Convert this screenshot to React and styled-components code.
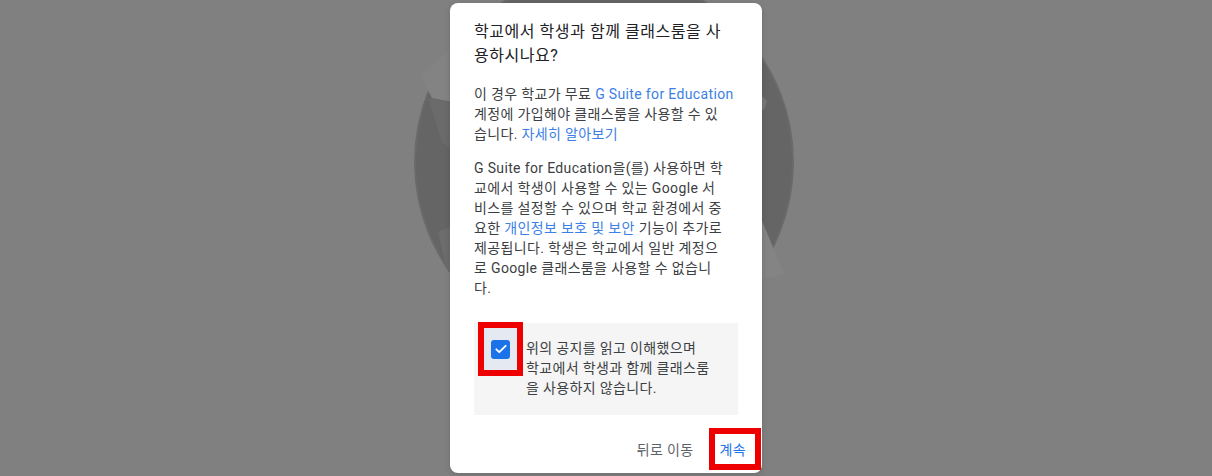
import React from 'react';
import styled, { createGlobalStyle } from 'styled-components';

const GlobalStyle = createGlobalStyle`
  html, body {
    margin: 0;
    padding: 0;
  }
  body {
    font-family: Roboto, "Noto Sans CJK KR", sans-serif;
  }
`;

const BLUE = '#1a73e8';
const LINK = '#3c7fe6';
const RED = '#ee0000';

function Backdrop() {
  return (
    <Art viewBox="0 0 1212 476" preserveAspectRatio="none">
      <circle cx="604" cy="162" r="189" fill="#656565" />
      <circle cx="604" cy="162" r="189" fill="none" stroke="#6a6a6a" strokeWidth="2" />
      <polygon points="420,76 452,46 452,102 432,98" fill="#838383" />
      <polygon points="428,98 452,102 452,150 442,142" fill="#6b6b6b" />
      <polygon points="438,232 452,226 452,274 446,266" fill="#6d6d6d" />
      <polygon points="760,216 784,274 760,280" fill="#848484" />
      <polygon points="760,94 767,101 764,110 760,108" fill="#787878" />
    </Art>
  );
}

function CheckIcon() {
  return (
    <svg width="14" height="14" viewBox="0 0 24 24">
      <path d="M4 12.5l5 5L20 6.5" fill="none" stroke="#fff" strokeWidth="3.2" strokeLinecap="round" strokeLinejoin="round" />
    </svg>
  );
}

function App() {
  return (
    <>
      <GlobalStyle />
      <Page>
        <Backdrop />
        <Dialog>
          <Content>
            <Title>
              학교에서 학생과 함께 클래스룸을 사<br />용하시나요?
            </Title>
            <Para gap={16}>
              이 경우 학교가 무료 <Link>G Suite for Education</Link>
              <br />계정에 가입해야 클래스룸을 사용할 수 있
              <br />습니다. <Link>자세히 알아보기</Link>
            </Para>
            <Para gap={14}>
              G Suite for Education을(를) 사용하면 학
              <br />교에서 학생이 사용할 수 있는 Google 서
              <br />비스를 설정할 수 있으며 학교 환경에서 중
              <br />요한 <Link>개인정보 보호 및 보안</Link> 기능이 추가로
              <br />제공됩니다. 학생은 학교에서 일반 계정으
              <br />로 Google 클래스룸을 사용할 수 없습니
              <br />다.
            </Para>
            <Notice>
              <CheckWrap>
                <Checkbox>
                  <CheckIcon />
                </Checkbox>
              </CheckWrap>
              <NoticeText>
                위의 공지를 읽고 이해했으며
                <br />학교에서 학생과 함께 클래스룸
                <br />을 사용하지 않습니다.
              </NoticeText>
            </Notice>
          </Content>
          <Footer>
            <TextButton>뒤로 이동</TextButton>
            <TextButton primary marked>계속</TextButton>
          </Footer>
        </Dialog>
      </Page>
    </>
  );
}

export default App;

const Page = styled.div`
  position: relative;
  width: 100%;
  height: 100vh;
  background: #808080;
  display: flex;
  align-items: center;
  justify-content: center;
  overflow: hidden;
`;

const Art = styled.svg`
  position: absolute;
  inset: 0;
  width: 100%;
  height: 100%;
`;

const Dialog = styled.div`
  position: relative;
  z-index: 1;
  width: 312px;
  background: #fff;
  border-radius: 8px;
  box-shadow: 0 2px 6px rgba(0, 0, 0, 0.15);
`;

const Content = styled.div`
  padding: 17px 24px 0;
`;

const Title = styled.h2`
  margin: 0;
  font-size: 16px;
  line-height: 24px;
  font-weight: 400;
  letter-spacing: 0.55px;
  color: #202124;
  white-space: nowrap;
`;

const Para = styled.p`
  margin: ${p => p.gap}px 0 0;
  font-size: 14px;
  line-height: 20px;
  letter-spacing: 0.35px;
  color: #3c4043;
  white-space: nowrap;
`;

const Link = styled.span`
  color: ${LINK};
`;

const Notice = styled.div`
  margin-top: 25px;
  background: #f5f5f5;
  display: flex;
  align-items: flex-start;
`;

const CheckWrap = styled.div`
  margin: -1px 0 0 4px;
  width: 33px;
  height: 42px;
  border: 6px solid ${RED};
  background: #e4e9f2;
  display: flex;
  align-items: center;
  justify-content: center;
  flex-shrink: 0;
`;

const Checkbox = styled.div`
  width: 19px;
  height: 19px;
  border-radius: 3px;
  background: ${BLUE};
  display: flex;
  align-items: center;
  justify-content: center;
`;

const NoticeText = styled.div`
  margin: 15px 0 17px 3px;
  font-size: 14px;
  line-height: 20px;
  letter-spacing: 0.35px;
  color: #3c4043;
  white-space: nowrap;
`;

const Footer = styled.div`
  display: flex;
  justify-content: flex-end;
  align-items: center;
  gap: 7px;
  padding: 13px 1px 3px 24px;
`;

const TextButton = styled.button`
  height: 42px;
  box-sizing: border-box;
  background: #fff;
  border: ${p => (p.marked ? `6px solid ${RED}` : 'none')};
  padding: ${p => (p.marked ? '0 9px 0 5px' : '0 8px')};
  font-family: Roboto, "Noto Sans CJK KR", sans-serif;
  font-size: 14px;
  letter-spacing: 0.35px;
  color: ${p => (p.primary ? BLUE : '#5f6368')};
  cursor: pointer;
`;
